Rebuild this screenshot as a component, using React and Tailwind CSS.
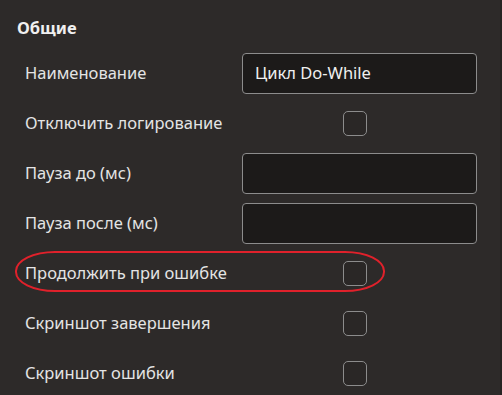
import React from "react";

const rows = [
  { label: "Наименование", type: "input", value: "Цикл Do-While" },
  { label: "Отключить логирование", type: "check" },
  { label: "Пауза до (мс)", type: "input", value: "" },
  { label: "Пауза после (мс)", type: "input", value: "" },
  { label: "Продолжить при ошибке", type: "check", highlight: true },
  { label: "Скриншот завершения", type: "check" },
  { label: "Скриншот ошибки", type: "check" },
];

export default function App() {
  return (
    <div
      className="relative w-[502px] h-[395px] overflow-hidden bg-[#2d2a29] text-[#e6e6e6] border-r-2 border-[#262322]"
      style={{ fontFamily: '"Noto Sans", "Open Sans", sans-serif' }}
    >
      <div className="h-[48px] pl-[17px] pt-[18px] text-[16.5px] font-bold leading-[20px] text-[#f0f0f0]">
        Общие
      </div>
      <div className="flex flex-col">
        {rows.map((r) => (
          <div key={r.label} className="relative flex h-[50px] items-center">
            {r.highlight && (
              <div className="absolute left-[15px] top-[3px] h-[41px] w-[370px] rounded-[40px/20px] border-2 border-[#e0212b]" />
            )}
            <div className="w-[242px] pl-[25px] text-[16.5px] leading-[22px] text-[#e4e4e4]">
              {r.label}
            </div>
            {r.type === "input" ? (
              <div className="flex h-[41px] w-[235px] items-center rounded-[4px] border border-[#8c8c8c] bg-[#1c1a19] pl-[12px] text-[16.5px] text-[#f0f0f0]">
                {r.value}
              </div>
            ) : (
              <div className="ml-[101px] h-[25px] w-[24px] rounded-[5px] border border-[#8c8c8c] bg-[#2a2726]" />
            )}
          </div>
        ))}
      </div>
    </div>
  );
}
